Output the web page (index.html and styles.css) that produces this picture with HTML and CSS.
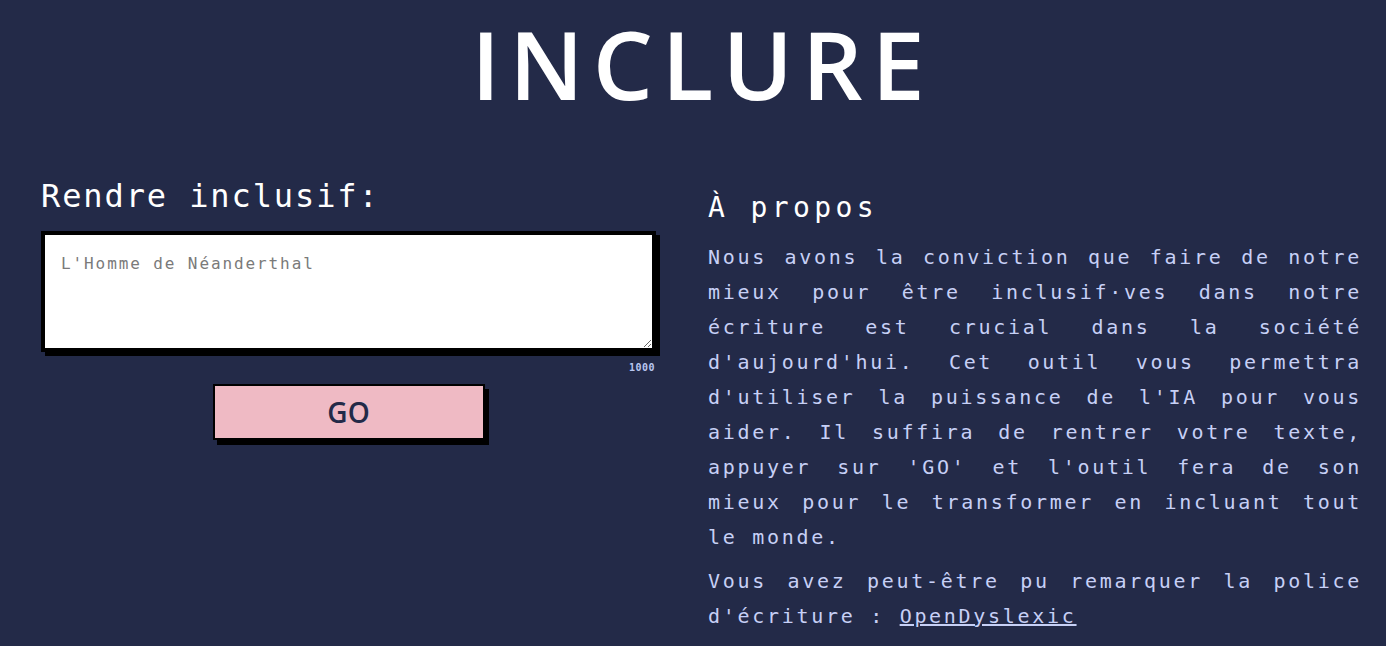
FILE: index.html
```html
<!DOCTYPE html>
<html lang="fr">
<head>
<meta charset="utf-8">
<title>Inclure</title>
<link rel="stylesheet" href="styles.css">
</head>
<body>
<header class="top">
  <h1 class="title">INCLURE</h1>
</header>
<main class="columns">
  <section class="tool">
    <h2 class="tool-title">Rendre inclusif:</h2>
    <div class="field">
      <textarea class="input" placeholder="L'Homme de Néanderthal"></textarea>
      <div class="counter">1000</div>
    </div>
    <div class="actions">
      <button class="go">GO</button>
    </div>
  </section>
  <section class="about">
    <h2 class="about-title">À propos</h2>
    <p class="text">Nous avons la conviction que faire de notre mieux pour être inclusif·ves dans notre écriture est crucial dans la société d'aujourd'hui. Cet outil vous permettra d'utiliser la puissance de l'IA pour vous aider. Il suffira de rentrer votre texte, appuyer sur 'GO' et l'outil fera de son mieux pour le transformer en incluant tout le monde.</p>
    <p class="text">Vous avez peut-être pu remarquer la police d'écriture : <a class="link" href="#">OpenDyslexic</a></p>
  </section>
</main>
</body>
</html>
```
FILE: styles.css
```css
html, body {
  margin: 0;
  padding: 0;
  background: #232a48;
}

body {
  font-family: "DejaVu Sans Mono", "Liberation Mono", monospace;
  color: #c7d0f6;
  height: 646px;
  overflow: hidden;
}

.top {
  padding-top: 11px;
  display: flex;
  justify-content: center;
}

.title {
  margin: 0;
  font-family: "Open Sans", "Noto Sans", sans-serif;
  font-weight: 600;
  font-size: 95px;
  line-height: 104px;
  letter-spacing: 9px;
  padding-left: 19px;
  color: #ffffff;
}

.columns {
  display: grid;
  grid-template-columns: 615px 654px;
  column-gap: 52px;
  padding: 61px 24px 0 41px;
}

.tool {
  display: flex;
  flex-direction: column;
}

.tool-title {
  margin: 0 0 15px 0;
  font-weight: normal;
  font-size: 32px;
  line-height: 40px;
  letter-spacing: 1.9px;
  color: #ffffff;
}

.field {
  display: flex;
  flex-direction: column;
}

.input {
  box-sizing: border-box;
  width: 615px;
  height: 121px;
  margin: 0;
  border: 4px solid #000;
  box-shadow: 4px 4px 0 #000;
  background: #fff;
  padding: 18px 16px;
  font-family: "DejaVu Sans Mono", monospace;
  font-size: 16px;
  line-height: 22px;
  letter-spacing: 1.9px;
  color: #333;
  outline: none;
}

.input::placeholder {
  color: #7a7a7a;
}

.counter {
  margin-top: 9px;
  text-align: right;
  padding-right: 1px;
  font-size: 10px;
  line-height: 14px;
  font-weight: bold;
  letter-spacing: 0.5px;
  color: #b9c6f0;
}

.actions {
  display: flex;
  justify-content: center;
  margin-top: 9px;
}

.go {
  box-sizing: border-box;
  width: 272px;
  height: 56px;
  border: 2px solid #000;
  box-shadow: 4px 5px 0 #000;
  background: #efbac4;
  color: #232a48;
  font-family: "Open Sans", "Noto Sans", sans-serif;
  font-weight: 600;
  font-size: 28px;
  padding: 0;
  cursor: pointer;
}

.about {
  display: flex;
  flex-direction: column;
}

.about-title {
  margin: 14px 0 14px 0;
  font-weight: normal;
  font-size: 28px;
  line-height: 36px;
  letter-spacing: 4.4px;
  color: #ffffff;
}

.text {
  margin: 0 0 9px 0;
  font-size: 20px;
  line-height: 35px;
  letter-spacing: 2.7px;
  text-align: justify;
}

.link {
  color: #c7d0f6;
  text-decoration: underline;
}
```
